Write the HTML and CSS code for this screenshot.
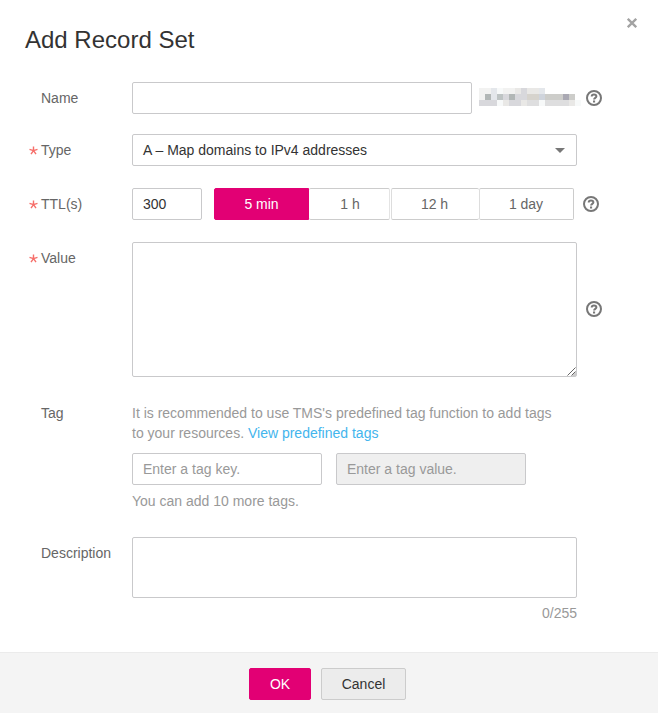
FILE: index.html
```html
<!DOCTYPE html>
<html lang="en">
<head>
<meta charset="utf-8">
<title>Add Record Set</title>
<link rel="stylesheet" href="styles.css">
</head>
<body>
<svg width="0" height="0" class="defs" aria-hidden="true">
  <symbol id="help" viewBox="0 0 16 16">
    <circle cx="8" cy="8" r="7" fill="none" stroke="currentColor" stroke-width="2"/>
    <path d="M5.7 6.6C5.7 5.1 6.6 4.4 8 4.4s2.4.7 2.4 1.9c0 1.6-2.3 1.6-2.3 3.3" fill="none" stroke="currentColor" stroke-width="2"/>
    <rect x="7" y="10.5" width="2.1" height="2" fill="currentColor"/>
  </symbol>
  <symbol id="star" viewBox="0 0 9 9">
    <path d="M4.5 4.7V.5M4.5 4.7L.5 3.4M4.5 4.7l4-1.3M4.5 4.7L2 8.2M4.5 4.7L7 8.2" fill="none" stroke="currentColor" stroke-width="1.4"/>
  </symbol>
</svg>
<main class="dialog">
  <header class="header">
    <h1 class="title">Add Record Set</h1>
    <button class="close" aria-label="Close"><svg width="10" height="10" viewBox="0 0 10 10"><path d="M.8.8l8.4 8.4M9.2.8L.8 9.2" stroke="currentColor" stroke-width="2.3"/></svg></button>
  </header>
  <form class="form">
    <div class="row">
      <label class="label">Name</label>
      <input class="field name">
      <svg class="masked" width="102" height="18" viewBox="0 0 17 3" shape-rendering="crispEdges">
        <path fill="#f2f2f1" d="M0 0h2v1H0zM4 0h2v1H4zM0 1h1v1H0z"/>
        <path fill="#e4e7eb" d="M2 0h1v1H2zM10 0h1v1h-1zM2 1h1v1H2z"/>
        <path fill="#f7f9f9" d="M3 0h1v1H3zM3 2h1v1H3zM10 2h1v1h-1zM16 2h1v1h-1z"/>
        <path fill="#e9e8e6" d="M6 0h1v1H6zM8 0h2v1H8zM4 2h1v1H4zM7 2h1v1H7zM15 2h1v1h-1z"/>
        <path fill="#d8d8dc" d="M7 0h1v1H7zM4 1h1v1H4zM6 1h2v1H6zM0 2h3v1H0zM5 2h2v1H5z"/>
        <path fill="#b2b7b6" d="M1 1h1v1H1zM5 1h1v1H5z"/>
        <path fill="#bec4c4" d="M3 1h1v1H3z"/>
        <path fill="#d6d3cd" d="M8 1h2v1H8z"/>
        <path fill="#cfd4dc" d="M10 1h1v1h-1z"/>
        <path fill="#cdcdca" d="M11 1h3v1h-3zM15 1h1v1h-1z"/>
        <path fill="#aaa9b3" d="M14 1h1v1h-1z"/>
        <path fill="#dededf" d="M8 2h2v1H8zM11 2h4v1h-4z"/>
      </svg>
      <svg class="help"><use href="#help"/></svg>
    </div>
    <div class="row type-row">
      <label class="label"><svg class="star"><use href="#star"/></svg>Type</label>
      <div class="field select">A – Map domains to IPv4 addresses<span class="caret"></span></div>
    </div>
    <div class="row ttl-row">
      <label class="label"><svg class="star"><use href="#star"/></svg>TTL(s)</label>
      <input class="field ttl" value="300">
      <div class="segments">
        <button type="button" class="seg seg-active">5 min</button>
        <button type="button" class="seg seg-1h">1 h</button>
        <button type="button" class="seg seg-12h">12 h</button>
        <button type="button" class="seg seg-day">1 day</button>
      </div>
      <svg class="help help-ttl"><use href="#help"/></svg>
    </div>
    <div class="row value-row">
      <label class="label"><svg class="star"><use href="#star"/></svg>Value</label>
      <div class="value-box">
        <textarea class="field value"></textarea>
        <svg class="grip" width="10" height="10" viewBox="0 0 10 10"><path d="M9 4.5V9H4.5z" fill="#ccc"/><path d="M.5 8.5l8-8M4.5 8.5l4-4" stroke="#555" stroke-width=".9"/></svg>
      </div>
      <svg class="help help-value"><use href="#help"/></svg>
    </div>
    <div class="row tag-row">
      <label class="label tag-label">Tag</label>
      <div class="tags">
        <p class="note">It is recommended to use TMS's predefined tag function to add tags<br>to your resources. <a class="link">View predefined tags</a></p>
        <div class="tag-fields">
          <input class="field tag" placeholder="Enter a tag key.">
          <input class="field tag" placeholder="Enter a tag value." disabled>
        </div>
        <p class="note remaining">You can add 10 more tags.</p>
      </div>
    </div>
    <div class="row desc-row">
      <label class="label">Description</label>
      <div class="desc-col">
        <textarea class="field desc"></textarea>
        <p class="note count">0/255</p>
      </div>
    </div>
  </form>
  <footer class="footer">
    <button class="btn ok">OK</button>
    <button class="btn cancel">Cancel</button>
  </footer>
</main>
</body>
</html>
```
FILE: styles.css
```css
* { box-sizing: border-box; }
body { margin: 0; background: #fff; }
body, button, input, textarea { font: 14px/20px "Liberation Sans", Arial, sans-serif; }
p, h1 { margin: 0; }
svg { display: block; flex: none; }
.defs { position: absolute; }
.dialog { width: 658px; height: 713px; display: flex; flex-direction: column; color: #666; }
.header { height: 82px; display: flex; justify-content: space-between; padding: 18px 21px 0 25px; }
.title { margin-top: 7px; font-size: 24px; line-height: 30px; font-weight: 400; color: #333; }
.close { align-self: flex-start; padding: 0; border: 0; background: none; color: #a3a3a3; }
.form { flex: 1; }
.row { display: flex; align-items: flex-start; }
.type-row { margin-top: 20px; }
.ttl-row { margin-top: 22px; }
.value-row { margin-top: 22px; }
.tag-row { margin-top: 26px; }
.desc-row { margin-top: 26px; }
.label { width: 132px; flex: none; padding: 6px 0 6px 41px; display: flex; }
.tag-label { padding-top: 0; }
.star { width: 9px; height: 9px; margin: 6px 3px 0 -12px; color: #f66f6a; }
.field { display: block; margin: 0; border: 1px solid #c9c9cb; border-radius: 2px; background: #fff; color: #333; padding: 0 10px; height: 32px; outline: 0; resize: none; }
.name { width: 340px; }
.masked { margin: 6px 5px 0 7px; }
.help { width: 16px; height: 16px; margin-top: 8px; color: #777; }
.select { width: 445px; display: flex; align-items: center; justify-content: space-between; }
.caret { border: 5px solid transparent; border-top-color: #777; border-bottom: 0; margin-right: 1px; }
.ttl { width: 70px; }
.segments { display: flex; margin-left: 12px; width: 360px; }
.seg { height: 32px; padding: 0; border: 1px solid #ccc; border-radius: 2px; background: #fff; color: #666; }
.seg-active { width: 95px; background: #e20074; border-color: #e20074; color: #fff; border-radius: 2px 0 0 2px; }
.seg-1h { width: 81px; padding-left: 2px; border-left: 0; border-right-color: #e4e4e4; }
.seg-12h { width: 88px; margin-left: 1px; padding-right: 2px; border-left-color: #ddd; border-right: 0; }
.seg-day { width: 95px; padding-right: 1px; border-left-color: #ddd; }
.help-ttl { margin-left: 9px; }
.value-box { position: relative; width: 445px; }
.value { width: 445px; height: 135px; }
.grip { position: absolute; right: 0; bottom: 0; }
.help-value { margin: 59px 0 0 9px; }
.note { color: #999; }
.link { color: #43b5ed; }
.tag-fields { display: flex; gap: 14px; margin-top: 10px; }
.tag { width: 190px; }
.tag::placeholder { color: #999; opacity: 1; }
.tag:disabled { background: #efefef; }
.remaining { margin-top: 6px; }
.desc-col { width: 445px; }
.desc { width: 445px; height: 61px; }
.count { margin-top: 5px; text-align: right; }
.footer { height: 61px; display: flex; justify-content: center; align-items: flex-start; gap: 10px; padding-top: 15px; padding-right: 3px; background: #f4f4f4; border-top: 1px solid #ebebeb; }
.btn { height: 32px; padding: 0; border: 1px solid #ccc; border-radius: 2px; }
.ok { width: 62px; background: #e20074; border-color: #e20074; color: #fff; }
.cancel { width: 85px; background: #ececec; color: #333; }
```
